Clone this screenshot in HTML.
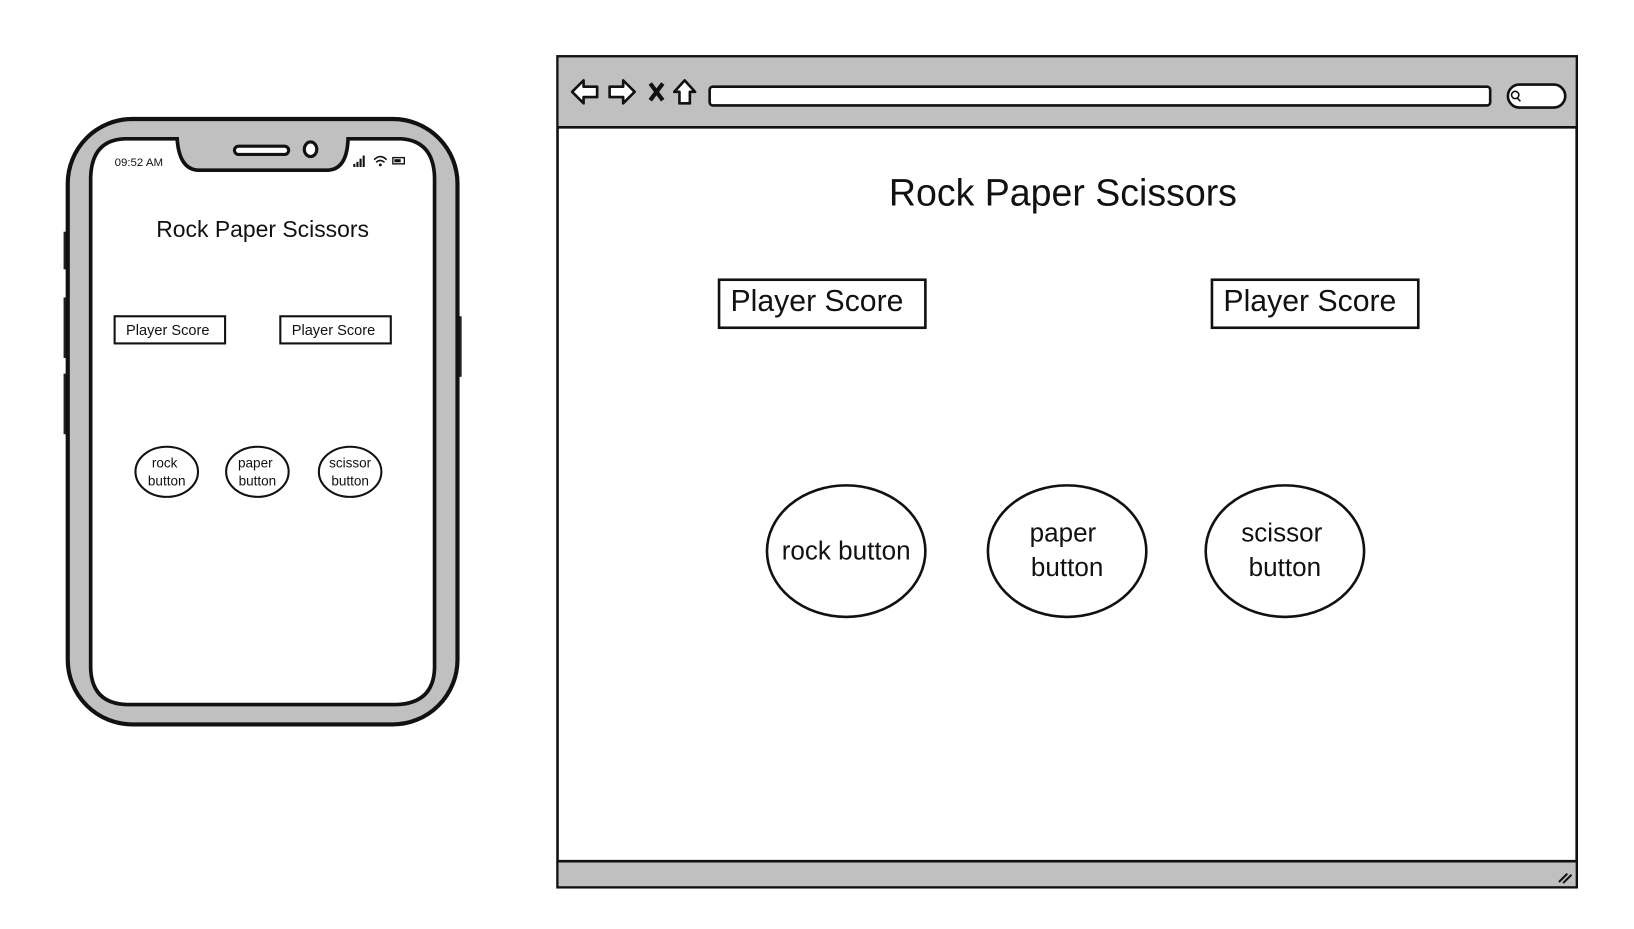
<!DOCTYPE html>
<html><head><meta charset="utf-8"><style>
html,body{margin:0;padding:0;background:#fff;width:1634px;height:929px;overflow:hidden}
svg{display:block}
text{font-family:"Liberation Sans",sans-serif;fill:#111}
</style></head><body>
<svg width="1634" height="929" viewBox="0 0 1568 890" preserveAspectRatio="none" xmlns="http://www.w3.org/2000/svg">
<!-- Phone -->
<rect x="61" y="222" width="6" height="36" fill="#222"/>
<rect x="61" y="285" width="6" height="58" fill="#222"/>
<rect x="61" y="358" width="6" height="58" fill="#222"/>
<rect x="437" y="303" width="6" height="58" fill="#222"/>
<rect x="65" y="114" width="374" height="580" rx="62" fill="#c0c0c0" stroke="#111" stroke-width="4"/>
<path d="M120 133 H170 Q172 162 190 163 H315 Q333 162 334 133 H385 Q416 135 417 170 V640 Q416 674 380 675 H122 Q88 674 87 640 V170 Q88 134 120 133 Z" fill="#fff" stroke="#111" stroke-width="3.5"/>
<rect x="225" y="140" width="52" height="8" rx="4" fill="#fff" stroke="#111" stroke-width="3"/>
<ellipse cx="298" cy="143" rx="6" ry="7" fill="#fff" stroke="#111" stroke-width="3"/>
<text x="110" y="159" font-size="11">09:52 AM</text>
<g fill="#111"><rect x="339" y="157" width="2" height="3"/><rect x="342" y="155" width="2" height="5"/><rect x="345" y="152" width="2" height="8"/><rect x="348" y="149" width="2" height="11"/></g>
<path d="M359 153 Q365 147 371 153 M361 155.5 Q365 152 369 155.5" fill="none" stroke="#111" stroke-width="1.5"/><circle cx="365" cy="158" r="1.4" fill="#111"/>
<rect x="377" y="151" width="11" height="6" fill="none" stroke="#111" stroke-width="1.3"/><rect x="378.5" y="152.5" width="6" height="3" fill="#111"/>
<text x="252" y="227" font-size="22" text-anchor="middle">Rock Paper Scissors</text>
<rect x="110" y="303" width="106" height="26" fill="#fff" stroke="#111" stroke-width="2"/>
<text x="161" y="321" font-size="14" text-anchor="middle">Player Score</text>
<rect x="269" y="303" width="106" height="26" fill="#fff" stroke="#111" stroke-width="2"/>
<text x="320" y="321" font-size="14" text-anchor="middle">Player Score</text>
<g fill="#fff" stroke="#111" stroke-width="2">
<ellipse cx="160" cy="452" rx="30" ry="24"/><ellipse cx="247" cy="452" rx="30" ry="24"/><ellipse cx="336" cy="452" rx="30" ry="24"/></g>
<g font-size="13" text-anchor="middle">
<text x="158" y="448">rock</text><text x="160" y="465">button</text>
<text x="245" y="448">paper</text><text x="247" y="465">button</text>
<text x="336" y="448">scissor</text><text x="336" y="465">button</text></g>

<!-- Browser -->
<rect x="535" y="54" width="978" height="796" fill="#fff" stroke="#111" stroke-width="2.5"/>
<rect x="536" y="55" width="976" height="67" fill="#c0c0c0"/>
<line x1="535" y1="122" x2="1513" y2="122" stroke="#111" stroke-width="2.5"/>
<rect x="536" y="825" width="976" height="24" fill="#c0c0c0"/>
<line x1="535" y1="825" x2="1513" y2="825" stroke="#111" stroke-width="2.5"/>
<path d="M1496 845 L1504 837 M1500 846 L1508 838" stroke="#111" stroke-width="2"/>
<path d="M549 88 L560 77 V83 H573 V93 H560 V99 Z" fill="#fff" stroke="#111" stroke-width="2.5" stroke-linejoin="round"/>
<path d="M609 88 L598 77 V83 H585 V93 H598 V99 Z" fill="#fff" stroke="#111" stroke-width="2.5" stroke-linejoin="round"/>
<path d="M624 80 L636 96 M636 80 L624 96" stroke="#111" stroke-width="4"/>
<path d="M657 77 L667 88 H662 V99 H652 V88 H647 Z" fill="#fff" stroke="#111" stroke-width="2.5" stroke-linejoin="round"/>
<rect x="681" y="83" width="749" height="18" rx="3" fill="#fff" stroke="#111" stroke-width="2.5"/>
<rect x="1447" y="81" width="55" height="22" rx="11" fill="#fff" stroke="#111" stroke-width="2.5"/>
<circle cx="1454" cy="91" r="3.5" fill="none" stroke="#111" stroke-width="1.5"/><line x1="1456" y1="94" x2="1459" y2="97" stroke="#111" stroke-width="1.5"/>
<text x="1020" y="197" font-size="36" text-anchor="middle">Rock Paper Scissors</text>
<rect x="690" y="268" width="198" height="46" fill="#fff" stroke="#111" stroke-width="2.5"/>
<text x="784" y="298" font-size="29" text-anchor="middle">Player Score</text>
<rect x="1163" y="268" width="198" height="46" fill="#fff" stroke="#111" stroke-width="2.5"/>
<text x="1257" y="298" font-size="29" text-anchor="middle">Player Score</text>
<g fill="#fff" stroke="#111" stroke-width="2.5">
<ellipse cx="812" cy="528" rx="76" ry="63"/><ellipse cx="1024" cy="528" rx="76" ry="63"/><ellipse cx="1233" cy="528" rx="76" ry="63"/></g>
<g font-size="25" text-anchor="middle">
<text x="812" y="536">rock button</text>
<text x="1020" y="519">paper</text><text x="1024" y="552">button</text>
<text x="1230" y="519">scissor</text><text x="1233" y="552">button</text></g>
</svg>
</body></html>
